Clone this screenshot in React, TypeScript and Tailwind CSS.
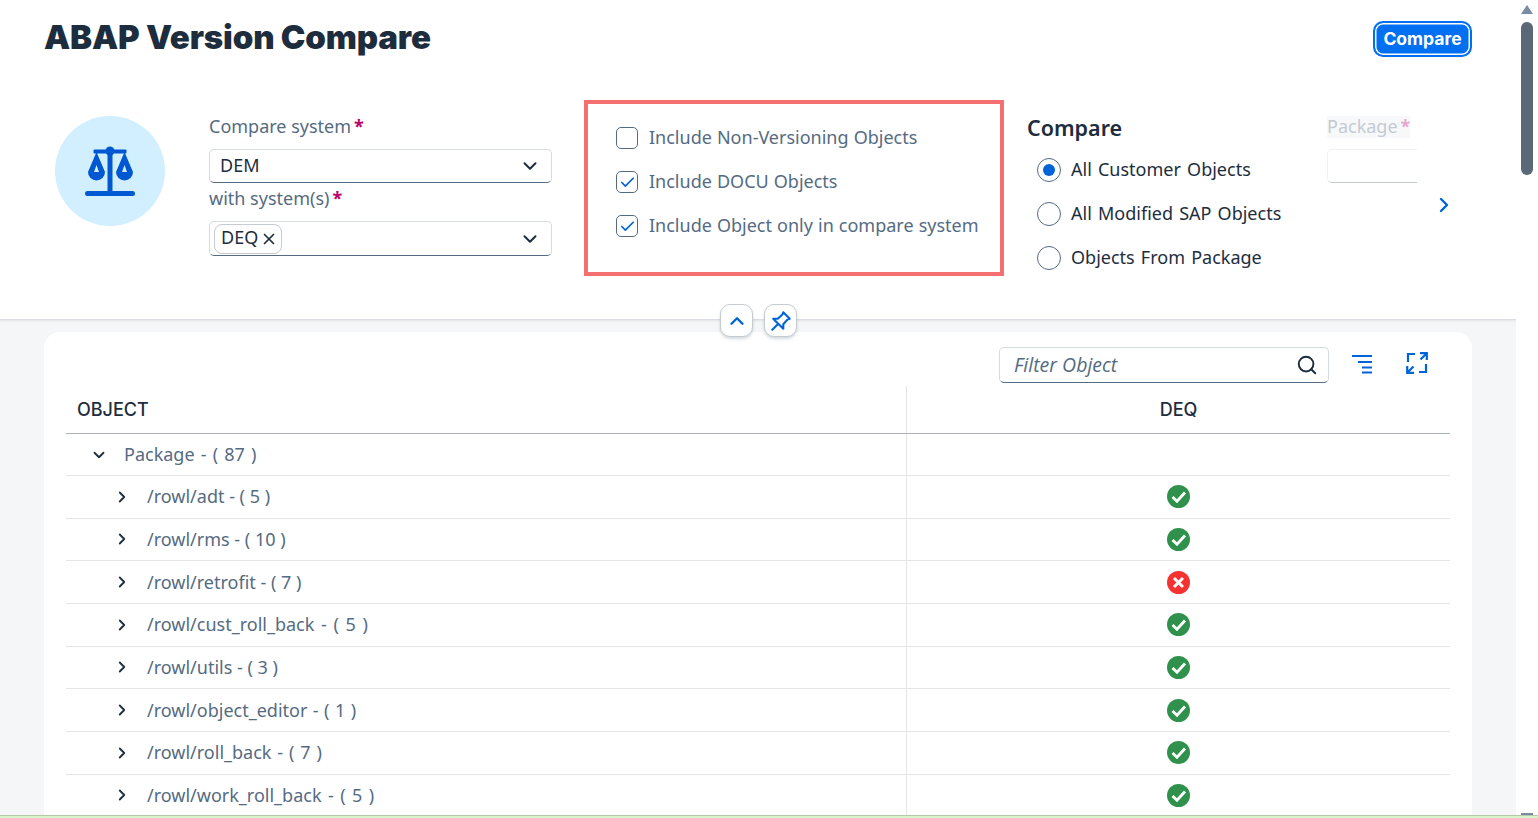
import { ChevronDown, ChevronRight, ChevronUp, Search, X, Check } from 'lucide-react';

// underscores run wider in the reference font, so those rows get extra word spacing
const rows = [
  { name: '/rowl/adt - ( 5 )', ok: true, cls: '' },
  { name: '/rowl/rms - ( 10 )', ok: true, cls: '' },
  { name: '/rowl/retrofit - ( 7 )', ok: false, cls: '' },
  { name: '/rowl/cust_roll_back - ( 5 )', ok: true, cls: '[word-spacing:2px]' },
  { name: '/rowl/utils - ( 3 )', ok: true, cls: '' },
  { name: '/rowl/object_editor - ( 1 )', ok: true, cls: '[word-spacing:0.8px]' },
  { name: '/rowl/roll_back - ( 7 )', ok: true, cls: '[word-spacing:1.2px]' },
  { name: '/rowl/work_roll_back - ( 5 )', ok: true, cls: '[word-spacing:1.75px]' },
];

function ScaleIcon() {
  return (
    <svg width="50" height="50" viewBox="0 0 50 50" fill="#0057d2">
      <circle cx="25" cy="5" r="4.5" />
      <rect x="8.5" y="3.5" width="33" height="4" rx="1" />
      <rect x="22.5" y="5" width="5" height="41" />
      <rect x="0" y="45" width="50" height="5" rx="2.5" />
      <path fillRule="evenodd" d="M11.5 6 L3 26 A8.5 8.5 0 0 0 20 26 Z M11.5 19 L9 26 H14 Z" />
      <path fillRule="evenodd" d="M39.5 6 L31 26 A8.5 8.5 0 0 0 48 26 Z M39.5 19 L37 26 H42 Z" />
    </svg>
  );
}

function StatusIcon({ ok }: { ok: boolean }) {
  return (
    <svg width="23" height="23" viewBox="0 0 23 23">
      <circle cx="11.5" cy="11.5" r="11.5" fill={ok ? '#30914c' : '#f53232'} />
      {ok ? (
        <path d="M5.5 12 L10 16.2 L18 7.5" fill="none" stroke="#fff" strokeWidth="2.8" />
      ) : (
        <path d="M7 7 L16 16 M16 7 L7 16" fill="none" stroke="#fff" strokeWidth="3" />
      )}
    </svg>
  );
}

function CheckRow({ label, checked }: { label: string; checked: boolean }) {
  return (
    <div className="flex h-11 items-center">
      <div className="flex h-[22px] w-[22px] items-center justify-center rounded-[5px] border border-[#556b82] bg-white">
        {checked && <Check size={17} strokeWidth={2.4} className="text-[#0064d9]" />}
      </div>
      <span className="ml-[11px] pb-[2px] text-[18px] text-[#556b82] [word-spacing:0.4px]">{label}</span>
    </div>
  );
}

function RadioRow({ label, selected }: { label: string; selected: boolean }) {
  return (
    <div className="flex h-11 items-center">
      <div className="flex h-6 w-6 items-center justify-center rounded-full border-[1.5px] border-[#556b82] bg-white">
        {selected && <div className="h-3 w-3 rounded-full bg-[#0064d9]" />}
      </div>
      <span className="ml-[10px] pb-[2px] text-[18px] text-[#1d2d3e] [word-spacing:1.5px]">{label}</span>
    </div>
  );
}

function FieldLabel({ text }: { text: string }) {
  return (
    <div className="flex h-[22px] items-center pb-[2px] text-[18px] text-[#556b82]">
      {text}
      <span className="ml-[3px] font-bold text-[#ba066c]">*</span>
    </div>
  );
}

export default function App() {
  return (
    <div
      className="flex h-[818px] w-[1538px] flex-col overflow-hidden bg-white"
      style={{ fontFamily: '"Noto Sans", sans-serif' }}
    >
      <div className="flex h-[815px]">
        <div className="relative w-[1516px] overflow-hidden bg-[#f5f6f7]">
          {/* header */}
          <div className="h-[320px] border-b border-[#d9dde1] bg-white shadow-[0_1px_2px_rgba(0,0,0,0.08)]">
            <div className="flex h-[100px] items-start justify-between pl-11 pr-11 pt-[15px]">
              <h1 className="font-['Inter'] text-[33px] leading-[44px] font-black tracking-[-0.15px] text-[#1d2d3e]">ABAP Version Compare</h1>
              <button className="mt-[6px] h-9 w-[99px] rounded-[10px] border-2 border-[#0070f2] bg-[#0070f2] font-['Inter'] text-[17.5px] leading-none font-bold text-white shadow-[inset_0_0_0_1.5px_#fff]">
                Compare
              </button>
            </div>
            <div className="flex items-start">
              <div className="ml-[55px] mt-4 flex h-[110px] w-[110px] items-center justify-center rounded-full bg-[#d1efff]">
                <ScaleIcon />
              </div>
              <div className="ml-11 w-[343px] pt-4">
                <FieldLabel text="Compare system" />
                <div className="mt-[11px] flex h-[34px] items-center justify-between rounded-[5px] border border-b-[1.5px] border-[#d5dadd] border-b-[#556b82] bg-white pl-[10px] pr-[10px]">
                  <span className="pb-[2px] text-[18px] text-[#1d2d3e]">DEM</span>
                  <ChevronDown size={22} strokeWidth={2.2} className="text-[#1d2d3e]" />
                </div>
                <div className="mt-[5px]">
                  <FieldLabel text="with system(s)" />
                </div>
                <div className="mt-[11px] flex h-[35px] items-center justify-between rounded-[5px] border border-b-[1.5px] border-[#d5dadd] border-b-[#556b82] bg-white pl-1 pr-[10px]">
                  <div className="flex h-[30px] items-center rounded-lg border border-[#c4cbd1] pb-[3px] pl-[6px] pr-[3px] text-[18px] text-[#1d2d3e]">
                    DEQ
                    <X size={18} strokeWidth={2.2} className="ml-[2px] mt-[3px] text-[#1d2d3e]" />
                  </div>
                  <ChevronDown size={22} strokeWidth={2.2} className="text-[#1d2d3e]" />
                </div>
              </div>
              <div className="ml-8 h-[176px] w-[420px] border-4 border-[#f47070] pl-7 pt-[12px]">
                <CheckRow label="Include Non-Versioning Objects" checked={false} />
                <CheckRow label="Include DOCU Objects" checked />
                <CheckRow label="Include Object only in compare system" checked />
              </div>
              <div className="ml-[23px] w-[300px] pt-[14px]">
                <div className="pb-[6px] text-[21.5px] leading-[28px] font-semibold text-[#1d2d3e]">Compare</div>
                <div className="pl-[10px]">
                  <RadioRow label="All Customer Objects" selected />
                  <RadioRow label="All Modified SAP Objects" selected={false} />
                  <RadioRow label="Objects From Package" selected={false} />
                </div>
              </div>
              <div className="w-[90px] overflow-hidden pt-4 opacity-35">
                <div className="w-fit bg-[#e9ecef]">
                  <FieldLabel text="Package" />
                </div>
                <div className="mt-[11px] h-[34px] w-[200px] rounded-[5px] border border-b-[1.5px] border-[#d5dadd] border-b-[#556b82]" />
              </div>
              <ChevronRight size={24} strokeWidth={2.4} className="ml-[15px] mt-[93px] text-[#0064d9]" />
            </div>
          </div>

          {/* collapse and pin buttons */}
          <div className="absolute left-[720px] top-[304px] flex gap-[11px]">
            <button className="flex h-[33px] w-[33px] items-center justify-center rounded-[10px] border border-[#c4cbd1] bg-white shadow-[0_2px_3px_rgba(85,107,130,0.25)]">
              <ChevronUp size={22} strokeWidth={2.6} className="text-[#0064d9]" />
            </button>
            <button className="flex h-[33px] w-[33px] items-center justify-center rounded-[10px] border border-[#c4cbd1] bg-white shadow-[0_2px_3px_rgba(85,107,130,0.25)]">
              <svg width="22" height="22" viewBox="0 0 24 24" fill="none" stroke="#0064d9" strokeWidth="2.3" strokeLinejoin="round" strokeLinecap="round">
                <path d="M14.5 2.5 L21.5 9.5 L19 10.5 L14.5 15.5 L14.5 20.5 L3.5 9.5 L8.5 9.5 L13.5 5 Z M8.5 15.5 L2.5 21.5" />
              </svg>
            </button>
          </div>

          {/* table card */}
          <div className="mx-11 mt-3 h-[600px] rounded-t-2xl bg-white px-[22px]">
            <div className="flex h-[54px] items-start justify-end pt-[15px]">
              <div className="flex h-9 w-[330px] items-center justify-between rounded-[5px] border border-b-[1.5px] border-[#d5dadd] border-b-[#556b82] pl-[14px] pr-[10px]">
                <span className="font-['Open_Sans'] text-[19.5px] text-[#556b82] italic">Filter Object</span>
                <Search size={22} strokeWidth={2.1} className="text-[#1d2d3e]" />
              </div>
              <svg className="ml-[22px] mt-[7px]" width="22" height="20" viewBox="0 0 22 20" fill="none" stroke="#0064d9" strokeWidth="2">
                <path d="M1 2 H21 M7 8 H21 M11 13.5 H21 M11 18.5 H21" />
              </svg>
              <svg className="ml-[33px] mr-[22px] mt-[5px]" width="22" height="22" viewBox="0 0 22 22" fill="none" stroke="#0064d9" strokeWidth="2.2">
                <path d="M9 2 H2 V10 M13 20 H20 V12 M14 1.2 H20.8 V8 M20.8 1.2 L14.5 7.5 M1.2 14 V20.8 H8 M1.2 20.8 L7.5 14.5" />
              </svg>
            </div>
            <div className="flex h-12 border-b border-[#a8b2bd]">
              <div className="flex w-[841px] items-center border-r border-[#e5e5e5] pl-[11px] font-['Inter'] text-[18px] font-medium text-[#1d2d3e]">OBJECT</div>
              <div className="flex flex-1 items-center justify-center font-['Inter'] text-[18px] font-medium text-[#1d2d3e]">DEQ</div>
            </div>
            <div className="flex h-[42px] border-b border-[#e5e5e5]">
              <div className="flex w-[841px] items-center border-r border-[#e5e5e5] pl-6">
                <ChevronDown size={18} strokeWidth={2.4} className="text-[#1d2d3e]" />
                <span className="ml-4 text-[18px] text-[#556b82] [word-spacing:1.5px]">Package - ( 87 )</span>
              </div>
            </div>
            {rows.map((r) => (
              <div key={r.name} className="flex h-[42.67px] border-b border-[#e5e5e5]">
                <div className="flex w-[841px] items-center border-r border-[#e5e5e5] pl-[47px]">
                  <ChevronRight size={18} strokeWidth={2.4} className="text-[#1d2d3e]" />
                  <span className={`ml-4 text-[18px] text-[#556b82] ${r.cls}`}>{r.name}</span>
                </div>
                <div className="flex flex-1 items-center justify-center">
                  <StatusIcon ok={r.ok} />
                </div>
              </div>
            ))}
          </div>
        </div>

        {/* scrollbar */}
        <div className="flex w-[22px] flex-col items-center bg-white pt-[5px]">
          <div className="h-0 w-0 border-x-[6px] border-b-[9px] border-x-transparent border-b-[#7a8ca3]" />
          <div className="mt-2 h-[153px] w-3 rounded-md bg-[#5b6878]" />
          <div className="mt-auto h-[2px] w-3 bg-[#7a8ca3]" />
        </div>
      </div>
      <div className="h-[3px] border-t border-[#b5c9a8] bg-[#d8f5c8]" />
    </div>
  );
}
